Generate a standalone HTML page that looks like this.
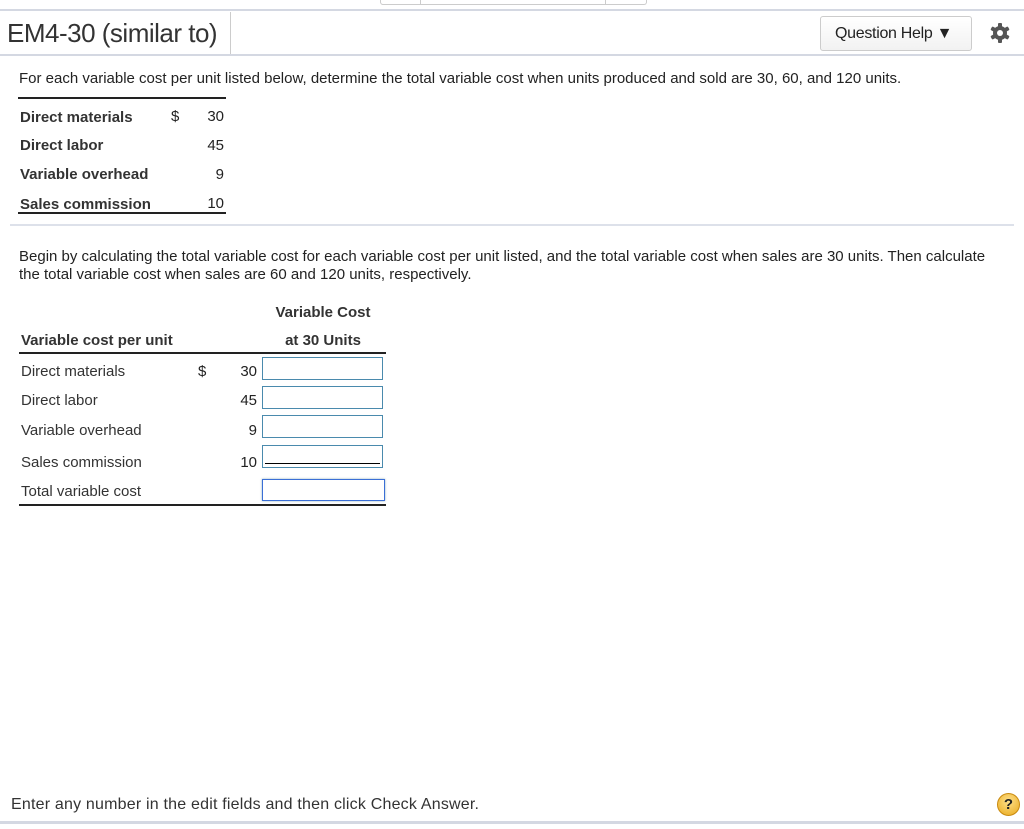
<!DOCTYPE html><html><head><style>
body{margin:0;width:1024px;height:829px;position:relative;background:#fff;font-family:"Liberation Sans",Arial,sans-serif;color:#222;overflow:hidden}
.a{position:absolute;white-space:nowrap}
.b{font-weight:bold}
.s{font-size:15px}
.in{position:absolute;left:262px;width:119px;height:21px;border:1px solid #4a8aad;background:#fff}
</style></head><body>
<div class="a" style="left:380px;top:-1px;width:265px;height:5px;border:1px solid #ccc;border-top:none;border-radius:0 0 3px 3px"></div>
<div class="a" style="left:420px;top:0;width:1px;height:4px;background:#ccc"></div>
<div class="a" style="left:605px;top:0;width:1px;height:4px;background:#ccc"></div>
<div class="a" style="left:0;top:9px;width:1024px;height:2px;background:#d4d8e2"></div>
<div class="a" style="left:7px;top:18px;font-size:26px;color:#333;letter-spacing:-0.5px">EM4-30 (similar to)</div>
<div class="a" style="left:230px;top:12px;width:1px;height:42px;background:#ccc"></div>
<div class="a" style="left:0;top:54px;width:1024px;height:2px;background:#d4d8e2"></div>
<div class="a" style="left:820px;top:16px;width:150px;height:33px;border:1px solid #ccc;border-radius:3px;background:linear-gradient(#fff,#f2f2f2)"></div>
<div class="a" style="left:835px;top:25px;font-size:16px;color:#222;letter-spacing:-0.3px">Question Help ▼</div>
<svg class="a" style="left:989px;top:22px" width="22" height="22" viewBox="0 0 22 22"><g fill="#555"><circle cx="11" cy="11" r="7"/><rect x="9" y="1" width="4" height="20" rx="1"/><rect x="9" y="1" width="4" height="20" rx="1" transform="rotate(60 11 11)"/><rect x="9" y="1" width="4" height="20" rx="1" transform="rotate(120 11 11)"/></g><circle cx="11" cy="11" r="3" fill="#fff"/></svg>
<div class="a s" style="left:19px;top:70px">For each variable cost per unit listed below, determine the total variable cost when units produced and sold are 30, 60, and 120 units.</div>
<div class="a" style="left:18px;top:97px;width:208px;height:2px;background:#222"></div>
<div class="a s b" style="left:20px;top:109px;color:#333">Direct materials</div>
<div class="a s b" style="left:20px;top:137px;color:#333">Direct labor</div>
<div class="a s b" style="left:20px;top:166px;color:#333">Variable overhead</div>
<div class="a s b" style="left:20px;top:196px;color:#333">Sales commission</div>
<div class="a s" style="left:171px;top:108px">$</div>
<div class="a s" style="left:190px;top:108px;width:34px;text-align:right">30</div>
<div class="a s" style="left:190px;top:137px;width:34px;text-align:right">45</div>
<div class="a s" style="left:190px;top:166px;width:34px;text-align:right">9</div>
<div class="a s" style="left:190px;top:195px;width:34px;text-align:right">10</div>
<div class="a" style="left:18px;top:212px;width:208px;height:2px;background:#222"></div>
<div class="a" style="left:10px;top:224px;width:1004px;height:2px;background:#dde1ea"></div>
<div class="a s" style="left:19px;top:248px;line-height:18px;white-space:normal;width:980px">Begin by calculating the total variable cost for each variable cost per unit listed, and the total variable cost when sales are 30 units. Then calculate the total variable cost when sales are 60 and 120 units, respectively.</div>
<div class="a s b" style="left:262px;top:304px;width:122px;text-align:center;color:#333">Variable Cost</div>
<div class="a s b" style="left:262px;top:332px;width:122px;text-align:center;color:#333">at 30 Units</div>
<div class="a s b" style="left:21px;top:332px;color:#333">Variable cost per unit</div>
<div class="a" style="left:19px;top:352px;width:367px;height:2px;background:#222"></div>
<div class="a s" style="left:21px;top:363px;color:#333">Direct materials</div>
<div class="a s" style="left:21px;top:392px;color:#333">Direct labor</div>
<div class="a s" style="left:21px;top:422px;color:#333">Variable overhead</div>
<div class="a s" style="left:21px;top:454px;color:#333">Sales commission</div>
<div class="a s" style="left:21px;top:483px;color:#333">Total variable cost</div>
<div class="a s" style="left:198px;top:363px">$</div>
<div class="a s" style="left:220px;top:363px;width:37px;text-align:right">30</div>
<div class="a s" style="left:220px;top:392px;width:37px;text-align:right">45</div>
<div class="a s" style="left:220px;top:422px;width:37px;text-align:right">9</div>
<div class="a s" style="left:220px;top:454px;width:37px;text-align:right">10</div>
<div class="in" style="top:357px"></div>
<div class="in" style="top:386px"></div>
<div class="in" style="top:415px"></div>
<div class="in" style="top:445px"></div>
<div class="a" style="left:265px;top:463px;width:115px;height:1px;background:#000"></div>
<div class="a" style="left:262px;top:479px;width:121px;height:20px;border:1px solid #3b6fd6;box-shadow:0 0 2px #8ab"></div>
<div class="a" style="left:19px;top:504px;width:367px;height:2px;background:#222"></div>
<div class="a" style="left:11px;top:796px;font-size:16px;color:#333;letter-spacing:0.2px">Enter any number in the edit fields and then click Check Answer.</div>
<div class="a" style="left:997px;top:793px;width:21px;height:21px;border-radius:50%;background:radial-gradient(circle at 50% 35%,#ffe08a,#e8a91c);border:1px solid #c98a10;text-align:center;font:bold 15px/21px 'Liberation Sans',sans-serif;color:#222">?</div>
<div class="a" style="left:0;top:821px;width:1024px;height:3px;background:#d4d8e2"></div>
</body></html>
